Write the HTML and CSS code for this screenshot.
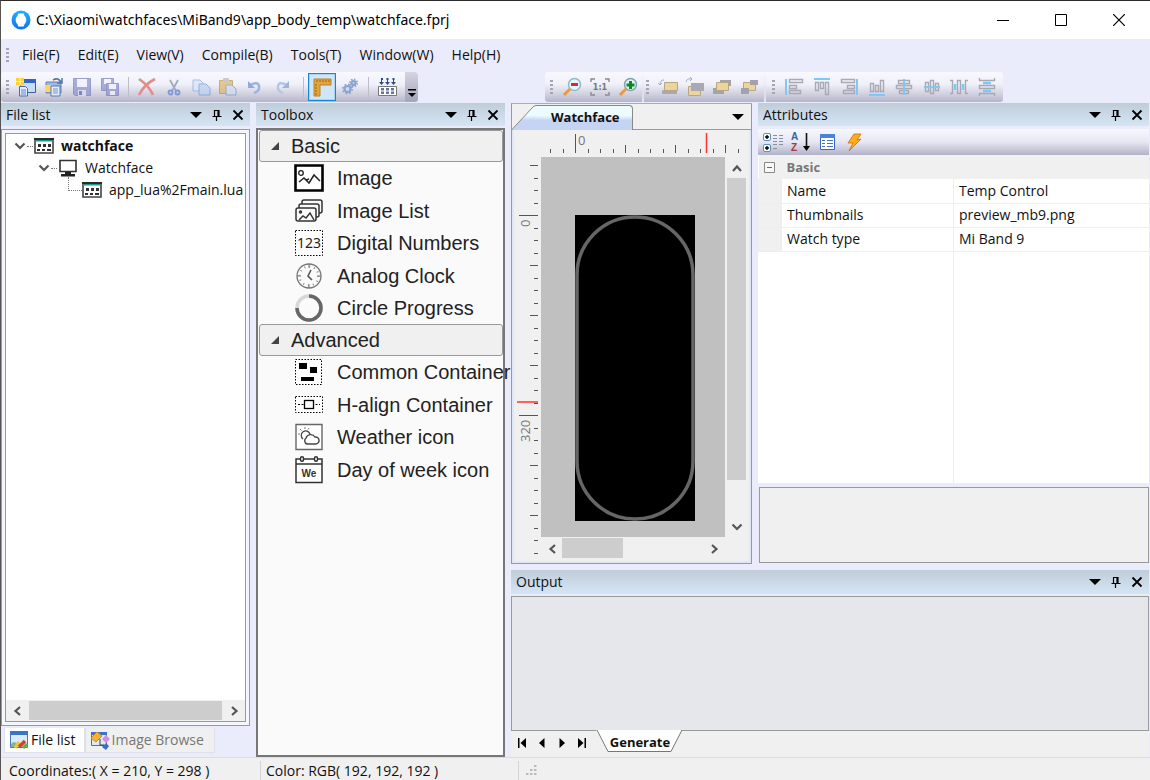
FILE: index.html
```html
<!DOCTYPE html>
<html lang="en">
<head>
<meta charset="utf-8">
<title>C:\Xiaomi\watchfaces\MiBand9\app_body_temp\watchface.fprj</title>
<link rel="stylesheet" href="styles.css">
</head>
<body>
<svg class="defs" aria-hidden="true">
  <defs>
    <linearGradient id="blue" x1="0" y1="0" x2="0" y2="1"><stop offset="0" stop-color="#19b4ff"/><stop offset="1" stop-color="#176ff0"/></linearGradient>
    <linearGradient id="tab" x1="0" y1="0" x2="0" y2="1"><stop offset=".4" stop-color="#edfbff"/><stop offset=".6" stop-color="#c6d4f3"/></linearGradient>
    <symbol id="i-down" viewBox="0 0 12 12"><path d="M0 3h12L6 9z"/></symbol>
    <symbol id="i-pin" viewBox="0 0 12 12"><path d="M3.500 1v6M3 1.500h5M7 1v6M8 1v6M1.500 7.500h9M5.500 8v4" fill="none" stroke="#000" stroke-width="1.200"/></symbol>
    <symbol id="i-close" viewBox="0 0 12 12"><path d="M1.500 1.500l9 9m0-9l-9 9" fill="none" stroke="#000" stroke-width="1.800"/></symbol>
    <symbol id="i-left" viewBox="0 0 12 12"><path d="M9 2L4.500 6L9 10" fill="none" stroke="#555" stroke-width="2.200"/></symbol>
    <symbol id="i-right" viewBox="0 0 12 12"><path d="M3 2l4.500 4L3 10" fill="none" stroke="#555" stroke-width="2.200"/></symbol>
    <symbol id="i-up" viewBox="0 0 12 12"><path d="M2 9l4-4.500L10 9" fill="none" stroke="#555" stroke-width="2.200"/></symbol>
    <symbol id="i-dn" viewBox="0 0 12 12"><path d="M1.500 3.500L6 8l4.500-4.500" fill="none" stroke="#555" stroke-width="2.200"/></symbol>
    <symbol id="i-script" viewBox="0 0 20 16"><path d="M1 1h18v14H1z" fill="#fff" stroke="#444" stroke-width="1.600"/><path d="M0 0h20v2H0z" fill="#2b2b2b"/><path d="M2 2h16v1.500H2z" fill="#149c94"/><path d="M4 6h3v3H4zM9 6h3v3H9zM14 6h3v3h-3zM3 11h3v2H3zM8 11h3v2H8zM13 11h4v2h-4z" fill="#333"/></symbol>
  </defs>
</svg>
<div class="app">
  <header class="titlebar">
    <svg width="20" height="20" viewBox="0 0 20 20"><circle cx="10" cy="10" r="9.500" fill="url(#blue)"/><path d="M7.200 3.500h5.600l.7 2.200c1.300 1.300 1.800 2.500 1.800 4.300s-.5 3-1.800 4.300l-.7 2.200H7.200l-.7-2.200C5.200 13 4.700 11.800 4.700 10s.5-3 1.800-4.300z" fill="#fff"/></svg>
    <h1>C:\Xiaomi\watchfaces\MiBand9\app_body_temp\watchface.fprj</h1>
    <div class="win-buttons">
      <button aria-label="Minimize"><svg width="12" height="12"><path d="M0 6.500h12" stroke="#000"/></svg></button>
      <button aria-label="Maximize"><svg width="12" height="12"><path d="M.5.500h11v11H.500z" fill="none" stroke="#000"/></svg></button>
      <button aria-label="Close"><svg width="12" height="12"><path d="M0 0l12 12M12 0L0 12" stroke="#000" stroke-width="1.200"/></svg></button>
    </div>
  </header>

  <nav class="menubar">
    <i class="grip"></i>
    <button>File(F)</button><button>Edit(E)</button><button>View(V)</button><button>Compile(B)</button><button>Tools(T)</button><button>Window(W)</button><button>Help(H)</button>
  </nav>

  <div class="toolbars">
    <div class="toolbar toolbar-main">
      <i class="grip"></i>
      <button class="tool wide" aria-label="New project"><svg width="20" height="20"><path d="M4.500 2.500h15v13h-15z" fill="#c9dcf6" stroke="#3f6092"/><path d="M4 2h16v4H4z" fill="#3166c4"/><path d="M3.500 9.500h6l2 2V19h-8z" fill="#dfeafb" stroke="#4a6fa8"/><path d="M5 13h5M5 15h5M5 17h5" stroke="#5f8ad0"/><path d="M0 1h8v7H0z" fill="#ffd033"/><path d="M4 0v9M0 4.500h8" stroke="#fff3b0"/></svg></button>
      <button class="tool wide" aria-label="Open project"><svg width="20" height="20"><path d="M2 5h15v11H2z" fill="#9fb9df" stroke="#6480aa"/><path d="M1 8h8v7H1z" fill="#ffd45c"/><path d="M9 3q5-3 8 2M18 1v5h-5" fill="none" stroke="#56749d" stroke-width="1.500"/><path d="M7 9h9v10H7z" fill="#e4edfc" stroke="#5579b5"/><path d="M9 12h5M9 14h5M9 16h5" stroke="#6e93d4"/></svg></button>
      <button class="tool wide faded" aria-label="Save"><svg width="20" height="20"><path d="M1.500 1.500h17v17H3l-1.500-1.500z" fill="#8b90cf" stroke="#747ab9"/><path d="M5 2h10v8H5z" fill="#f2f3ff"/><path d="M6 13h8v6H6z" fill="#dadcf0"/><path d="M7 14h3v4H7z" fill="#5e64a4"/></svg></button>
      <button class="tool wide faded" aria-label="Save all"><svg width="20" height="20"><path d="M1.500 1.500h12v12h-12z" fill="#8b90cf" stroke="#747ab9"/><path d="M4 2h7v5H4z" fill="#f2f3ff"/><path d="M6.500 6.500h12v12h-12z" fill="#8b90cf" stroke="#747ab9"/><path d="M9 7h7v5H9zM10 14h5v4h-5z" fill="#f2f3ff"/></svg></button>
      <i class="sep"></i>
      <div class="run">
        <button class="tool" aria-label="Delete"><svg width="20" height="20"><path d="M2 2c6 4 11 9 14 16M18 2C10 6 5 12 2 18" fill="none" stroke="#e08d8b" stroke-width="2.600"/></svg></button>
        <button class="tool" aria-label="Cut"><svg width="20" height="20"><path d="M6 3l6 11M14 3L8 14" stroke="#9dabc5" stroke-width="1.800"/><circle cx="6.500" cy="15.500" r="2" fill="none" stroke="#7d97da" stroke-width="1.800"/><circle cx="13.500" cy="15.500" r="2" fill="none" stroke="#7d97da" stroke-width="1.800"/></svg></button>
        <button class="tool faded" aria-label="Copy"><svg width="20" height="20"><path d="M2 3h7l3 3v8H2z" fill="#d9e5f8" stroke="#8aa9d6"/><path d="M8 7h7l4 4v7H8z" fill="#b9d0f4" stroke="#7598ce"/></svg></button>
        <button class="tool faded" aria-label="Paste"><svg width="20" height="20"><path d="M1.500 3.500h13v13h-13z" fill="#e0b763" stroke="#b5904c"/><path d="M5 1h6v4H5z" fill="#b9bac0"/><path d="M8 8h6l4 4v6H8z" fill="#cfdcf2" stroke="#8195b5"/></svg></button>
        <button class="tool" aria-label="Undo"><svg width="20" height="20"><path d="M5 8q8-4 9 1t-5 7" fill="none" stroke="#9db4e2" stroke-width="2.400"/><path d="M3 4v7h7z" fill="#8faadf"/></svg></button>
        <button class="tool" aria-label="Redo"><svg width="20" height="20"><path d="M15 8Q7 4 6 9t5 7" fill="none" stroke="#b3c6e8" stroke-width="2.400"/><path d="M17 4v7h-7z" fill="#9db4dc"/></svg></button>
      </div>
      <i class="sep"></i>
      <button class="tool wide selected" aria-label="Show ruler" aria-pressed="true"><svg width="20" height="20"><path d="M2 2h17v6H8v11H2z" fill="#e5a33b" stroke="#bc8127"/><path d="M5 3v2M8 3v2M11 3v2M14 3v2M17 3v2M3 8h2M3 11h2M3 14h2M3 17h2" stroke="#9a6315"/></svg></button>
      <button class="tool wide" aria-label="Settings"><svg width="20" height="20"><g fill="#c8dbf8" stroke="#8aa3cf" stroke-width="2.200"><circle cx="7.500" cy="12" r="3"/><circle cx="13.500" cy="6" r="2"/></g><g fill="none" stroke="#8aa3cf" stroke-width="1.600"><circle cx="7.500" cy="12" r="4.700" stroke-dasharray="1.800 1.900"/><circle cx="13.500" cy="6" r="3.700" stroke-dasharray="1.500 1.400"/></g></svg></button>
      <i class="sep"></i>
      <button class="tool wide" aria-label="Build"><svg width="20" height="20"><path d="M4.500 1v6M10.500 1v6M16.500 1v6" stroke="#2b4c87"/><path d="M2 5h5L4.500 8zM8 5h5l-2.500 3zM14 5h5l-2.500 3zM4 1h2v2H4zM9.500 1h2v2h-2zM15.500 1h2v2h-2z" fill="#2b4c87"/><path d="M1.500 9.500h18v9h-18z" fill="#fff" stroke="#777"/><path d="M4 11h3v6H4zM9 11h3v6H9zM14 11h3v6h-3z" fill="#6273a4"/><path d="M2 14h17" stroke="#fff"/></svg></button>
      <button class="overflow" aria-label="Toolbar options"><svg width="8" height="10"><path d="M0 1h8v1.500H0zM0 5h8L4 9z"/></svg></button>
    </div>

    <div class="toolbar">
      <i class="grip"></i>
      <button class="tool wide" aria-label="Zoom out"><svg width="20" height="20"><path d="M8 12l-6 6" stroke="#f0983b" stroke-width="3"/><circle cx="12.500" cy="7.500" r="6" fill="#e7f7fb" stroke="#8fb9c9" stroke-width="1.500"/><path d="M9 6h7v3H9z" fill="#d8263a"/></svg></button>
      <button class="tool wide" aria-label="Actual size"><svg width="20" height="20"><path d="M1 5V2h4M15 2h4v3M1 15v3h4M15 18h4v-3" fill="none" stroke="#8a8a90" stroke-width="1.400"/><text x="10" y="13" text-anchor="middle" class="icon-text">1:1</text></svg></button>
      <button class="tool wide" aria-label="Zoom in"><svg width="20" height="20"><path d="M8 12l-6 6" stroke="#f0983b" stroke-width="3"/><circle cx="12.500" cy="7.500" r="6" fill="#dff5ee" stroke="#7fa3b0" stroke-width="1.500"/><path d="M11 4h3v2.500h2.500v3H14V12h-3V9.500H8.500v-3H11z" fill="#0a8a20"/></svg></button>
      <i class="joint"></i>
      <i class="grip"></i>
      <button class="tool" aria-label="Bring forward"><svg width="20" height="20"><path d="M7 12h12v5H4v-3z" fill="#a9a9b3"/><path d="M6.500 5.500h13v8h-13z" fill="#ecd49a" stroke="#b5a785"/><path d="M6 3Q2 3 2 8M0 6l2 2 2-2" fill="none" stroke="#9db0cc"/></svg></button>
      <button class="tool" aria-label="Send backward"><svg width="20" height="20"><path d="M3.500 9.500h12v9h-12z" fill="#ecd49a" stroke="#b5a785"/><path d="M6 6h13v8H6z" fill="#a9a9b3"/><path d="M1 5Q2 1 6 2M5 0l2 2-2 2" fill="none" stroke="#9db0cc"/></svg></button>
      <button class="tool" aria-label="Bring to front"><svg width="20" height="20"><path d="M8 3h11v6H8zM1 11h11v6H1z" fill="#a3a3ad"/><path d="M4.500 5.500h12v8h-12z" fill="#ecd49a" stroke="#b5a785"/></svg></button>
      <button class="tool" aria-label="Send to back"><svg width="20" height="20"><path d="M4.500 5.500h12v8h-12z" fill="#ecd49a" stroke="#b5a785"/><path d="M11 3h8v5h-8zM2 11h8v6H2z" fill="#a3a3ad"/></svg></button>
      <i class="joint last"></i>
      <i class="grip"></i>
      <button class="tool wide" aria-label="Align left"><svg width="20" height="20"><path d="M2 2v16" stroke="#7cc8f6" stroke-width="2"/><path d="M5.500 2.500h13v3h-13zM5.500 8.500h7v3h-7zM5.500 13.500h11v3h-11z" class="shape"/></svg></button>
      <button class="tool" aria-label="Align top"><svg width="20" height="20"><path d="M2 2h16" stroke="#7cc8f6" stroke-width="2"/><path d="M3.500 5.500h3v8h-3zM8.500 5.500h3v6h-3zM13.500 5.500h3v12h-3z" class="shape"/></svg></button>
      <button class="tool wide" aria-label="Align right"><svg width="20" height="20"><path d="M18 2v16" stroke="#7cc8f6" stroke-width="2"/><path d="M2.500 2.500h13v3h-13zM8.500 8.500h7v3h-7zM4.500 13.500h11v3h-11z" class="shape"/></svg></button>
      <button class="tool" aria-label="Align bottom"><svg width="20" height="20"><path d="M2 18h16" stroke="#7cc8f6" stroke-width="2"/><path d="M3.500 6.500h3v8h-3zM8.500 8.500h3v6h-3zM13.500 3.500h3v11h-3z" class="shape"/></svg></button>
      <button class="tool wide" aria-label="Align centre vertically"><svg width="20" height="20"><path d="M4.500 3.500h11v3h-11zM2.500 8.500h15v3h-15zM5.500 13.500h9v3h-9z" class="shape"/><path d="M10 2v16" stroke="#7cc8f6" stroke-width="2"/></svg></button>
      <button class="tool" aria-label="Align centre horizontally"><svg width="20" height="20"><path d="M3.500 5.500h3v9h-3zM8.500 3.500h3v13h-3zM13.500 6.500h3v7h-3z" class="shape"/><path d="M2 10h16" stroke="#7cc8f6" stroke-width="2"/></svg></button>
      <button class="tool wide" aria-label="Distribute horizontally"><svg width="20" height="20"><path d="M1 3.500h2.500v13H1M19 3.500h-2.500v13H19M8.500 3.500h3v13h-3z" class="shape"/><path d="M6 7v6M14 7v6" stroke="#7cc8f6" stroke-width="2.500"/></svg></button>
      <button class="tool" aria-label="Distribute vertically"><svg width="20" height="20"><path d="M2.500 1v2.500h15V1M2.500 19v-2.500h15V19M2.500 8.500h15v3h-15z" class="shape"/><path d="M6 6h8M6 14h8" stroke="#7cc8f6" stroke-width="2.500"/></svg></button>
    </div>
  </div>

  <main class="workspace">
    <section class="panel files">
      <header class="panel-head"><h2>File list</h2><button aria-label="Menu"><svg><use href="#i-down"/></svg></button><button aria-label="Pin"><svg><use href="#i-pin"/></svg></button><button aria-label="Close"><svg><use href="#i-close"/></svg></button></header>
      <div class="frame">
        <div class="tree-box">
          <ul class="tree">
            <li class="lv1"><svg class="chev"><use href="#i-dn"/></svg><i class="dots"></i><svg width="20" height="16"><use href="#i-script"/></svg><b>watchface</b></li>
            <li class="lv2"><svg class="chev"><use href="#i-dn"/></svg><i class="dots"></i><svg width="20" height="18"><path d="M2 1.500h16v11H2z" fill="#fff" stroke="#333" stroke-width="1.600"/><path d="M7 13h6v2H7zM3 15h14v2.500H3z" fill="#222"/></svg><span>Watchface</span></li>
            <li class="lv3"><i class="elbow"></i><svg width="20" height="16"><use href="#i-script"/></svg><span>app_lua%2Fmain.lua</span></li>
          </ul>
          <div class="scroll-h"><button aria-label="Scroll left"><svg><use href="#i-left"/></svg></button><i class="thumb"></i><button aria-label="Scroll right"><svg><use href="#i-right"/></svg></button></div>
        </div>
      </div>
      <div class="dock-tabs">
        <button class="on"><svg width="20" height="20"><path d="M1.500 1.500h17v16h-17z" fill="#dceaf8" stroke="#4b79c0"/><path d="M1 1h18v4H1z" fill="#3973cb"/><path d="M2 14q3-4 6 0v3H2z" fill="#7fb7a0"/><path d="M6 18l3-5 3 2" stroke="#f0c52e" stroke-width="3" fill="none"/><path d="M10 17l6-6" stroke="#e33b2b" stroke-width="3.500"/><path d="M14 18l4-4" stroke="#58b53a" stroke-width="3"/></svg>File list</button>
        <button><svg width="20" height="20"><path d="M1.500 2.500h15v13h-15z" fill="#dceaf8" stroke="#4b6fa8"/><path d="M1 2h16v3H1z" fill="#3973cb"/><path d="M7 2l5 4-6 6-5-4z" fill="#f4b332" stroke="#d08a1c"/><path d="M16 5l4 4-4 4-4-4z" fill="#d78ce4"/><path d="M16 13l3 3-3 4-4-3z" fill="#3970cc"/><path d="M10 9v6h4" fill="none" stroke="#444"/></svg>Image Browse</button>
      </div>
    </section>

    <section class="panel toolbox">
      <header class="panel-head"><h2>Toolbox</h2><button aria-label="Menu"><svg><use href="#i-down"/></svg></button><button aria-label="Pin"><svg><use href="#i-pin"/></svg></button><button aria-label="Close"><svg><use href="#i-close"/></svg></button></header>
      <div class="tool-list">
        <button class="cat"><svg width="8" height="8"><path d="M8 0v8H0z" fill="#444"/></svg>Basic</button>
        <ul>
          <li><svg width="30" height="28"><path d="M1.500 1.500h27v25h-27z" fill="#fff" stroke="#000" stroke-width="2.600"/><circle cx="7" cy="9" r="2.300" fill="none" stroke="#222" stroke-width="1.300"/><path d="M5 18l5-4 5 5 5-8 6 6M12 16l3-1" fill="none" stroke="#222" stroke-width="1.500"/></svg>Image</li>
          <li><svg width="30" height="28"><g fill="#fafafa" stroke="#333" stroke-width="1.500"><rect x="8" y="3" width="20" height="13" rx="2"/><rect x="5" y="7" width="20" height="13" rx="2"/><rect x="2" y="11" width="20" height="13" rx="2"/><circle cx="6.500" cy="15" r="1"/><path d="M5 23l4-4 3 2 4-5 4 7" fill="none"/></g></svg>Image List</li>
          <li><svg width="30" height="28"><rect x="1.500" y="1.500" width="27" height="25" fill="#fff" stroke="#000" stroke-dasharray="1.500 1.500"/><text x="15" y="19" text-anchor="middle" class="digits">123</text></svg>Digital Numbers</li>
          <li><svg width="30" height="28"><circle cx="15" cy="14" r="12" fill="none" stroke="#777" stroke-width="1.300"/><circle cx="15" cy="14" r="9.500" fill="none" stroke="#888" stroke-width="2" stroke-dasharray="1 3.970"/><path d="M15 2v4M15 22v4M3 14h4M23 14h4" stroke="#777"/><path d="M17 8l-3 6 4 4" fill="none" stroke="#555" stroke-width="1.600"/></svg>Analog Clock</li>
          <li><svg width="30" height="28"><circle cx="15" cy="14" r="12" fill="none" stroke="#d8d8d8" stroke-width="3.500"/><path d="M15 2a12 12 0 1 1-12 12" fill="none" stroke="#666" stroke-width="3.500"/></svg>Circle Progress</li>
        </ul>
        <button class="cat"><svg width="8" height="8"><path d="M8 0v8H0z" fill="#444"/></svg>Advanced</button>
        <ul>
          <li><svg width="30" height="28"><rect x="1.500" y="1.500" width="26" height="25" fill="#fff" stroke="#000" stroke-dasharray="1.500 1.500"/><path d="M5 5h8v6H5zM16 9h7v6h-7zM7 19h13v4H7z"/></svg>Common Container</li>
          <li><svg width="30" height="28"><rect x="1.500" y="5.500" width="27" height="16" fill="#fff" stroke="#000" stroke-dasharray="1.500 1.500"/><path d="M4 13.500h22" stroke="#000" stroke-dasharray="2 1.500"/><rect x="10.500" y="9.500" width="9" height="8" fill="#fff" stroke="#000" stroke-width="1.300"/></svg>H-align Container</li>
          <li><svg width="30" height="28"><path d="M2 1.500h26v25H2z" fill="#fff" stroke="#666" stroke-width="1.400"/><path d="M13 21a3.500 3.500 0 0 1-1-6 5 5 0 0 1 9-1 3.500 3.500 0 1 1 1 7z" fill="none" stroke="#444" stroke-width="1.400"/><path d="M9 16a4.500 4.500 0 1 1 7-5" fill="none" stroke="#444" stroke-width="1.300"/><path d="M11 4v2M6 6l1.500 1.500M4 11h2M15 5l-1 1.500" stroke="#777"/></svg>Weather icon</li>
          <li><svg width="30" height="28"><path d="M2 3h26v23.500H2zM2 8h26" fill="#fff" stroke="#333" stroke-width="1.500"/><g fill="#fff" stroke="#333" stroke-width="1.500"><rect x="6.500" y=".8" width="3" height="4.500" rx="1.500"/><rect x="20.500" y=".8" width="3" height="4.500" rx="1.500"/></g><text x="15" y="21" text-anchor="middle" class="we">We</text></svg>Day of week icon</li>
        </ul>
      </div>
    </section>

    <div class="right">
      <div class="upper">
        <section class="document">
          <div class="doc-tabs">
            <button class="doc-tab"><svg width="24" height="26"><path d="M0 26L20 4Q22 1.500 24 1.500V26z" fill="url(#tab)"/><path d="M0 25.500L20 4Q22 1.500 24 1.500" fill="none" stroke="#888"/></svg><span>Watchface</span></button>
            <button class="doc-menu" aria-label="Documents"><svg width="12" height="12"><use href="#i-down"/></svg></button>
          </div>
          <div class="doc-body">
            <div class="ruler-top">
              <svg width="210" height="28"><path d="M9.500 19v4M22.500 19v4M47.500 19v4M59.500 19v4M72.500 19v4M97.500 19v4M109.500 19v4M122.500 19v4M147.500 19v4M159.500 19v4M172.500 19v4M197.500 19v4M84.500 15v8M134.500 15v8M184.500 15v8M34.500 4v19" stroke="#555"/><path d="M165.500 3v20" stroke="#f33" stroke-width="1.500"/><text x="37" y="15">0</text></svg>
            </div>
            <div class="ruler-left">
              <svg width="27" height="400"><path d="M20 21.500h4M20 33.500h4M20 46.500h4M20 71.500h4M20 83.500h4M20 96.500h4M20 121.500h4M20 133.500h4M20 146.500h4M20 171.500h4M20 183.500h4M20 196.500h4M20 221.500h4M20 233.500h4M20 246.500h4M20 271.500h4M20 283.500h4M20 296.500h4M20 321.500h4M20 333.500h4M20 346.500h4M20 371.500h4M20 383.500h4M20 396.500h4M16 8.500h8M16 108.500h8M16 158.500h8M16 208.500h8M16 358.500h8M16 308.500h8M5 58.500h19M5 258.500h19" stroke="#555"/><path d="M3 245h21" stroke="#f33" stroke-width="1.500"/><text transform="translate(16 70) rotate(-90)">0</text><text transform="translate(16 285) rotate(-90)">320</text></svg>
            </div>
            <div class="canvas"><svg width="120" height="306"><path d="M0 0h120v306H0z"/><rect x="2" y="2" width="116" height="302" rx="58" fill="none" stroke="#666" stroke-width="3.500"/></svg></div>
            <div class="scroll-v"><button aria-label="Scroll up"><svg><use href="#i-up"/></svg></button><i class="thumb"></i><button aria-label="Scroll down"><svg><use href="#i-dn"/></svg></button></div>
            <div class="scroll-h"><button aria-label="Scroll left"><svg><use href="#i-left"/></svg></button><i class="thumb"></i><button aria-label="Scroll right"><svg><use href="#i-right"/></svg></button></div>
          </div>
        </section>

        <section class="panel attributes">
          <header class="panel-head"><h2>Attributes</h2><button aria-label="Menu"><svg><use href="#i-down"/></svg></button><button aria-label="Pin"><svg><use href="#i-pin"/></svg></button><button aria-label="Close"><svg><use href="#i-close"/></svg></button></header>
          <div class="attr-tools">
            <button aria-label="Categorized"><svg width="20" height="20"><g fill="#fff" stroke="#5d8fbd"><rect x=".5" y="1.500" width="7" height="7" rx="1.500"/><rect x=".5" y="12.500" width="7" height="7" rx="1.500"/></g><path d="M2 5h4M4 3v4M2 16h4M4 14v4" stroke="#000" stroke-width="1.400"/><path d="M10 3.500h4M16 3.500h4M10 6.500h4M16 6.500h4M10 9.500h4M16 9.500h4M10 12.500h4M16 12.500h4M10 16.500h4" stroke="#8294a4"/></svg></button>
            <button aria-label="Sort A to Z"><svg class="az" width="20" height="20"><text x="1" y="8" fill="#3b62a8">A</text><text x="1" y="19" fill="#a43b3b">Z</text><path d="M16.500 1v15" stroke="#111" stroke-width="1.600"/><path d="M13 14h7l-3.500 5z"/></svg></button>
            <button aria-label="Properties"><svg width="20" height="20"><path d="M3.500 2.500h14v15h-14z" fill="#fff" stroke="#3566c0"/><path d="M3 2h15v4H3z" fill="#4a83dd"/><path d="M5 8.500h3M5 11.500h3M5 14.500h3M10 8.500h6M10 11.500h6M10 14.500h6" stroke="#4572be"/></svg></button>
            <button aria-label="Events"><svg width="20" height="20"><path d="M10 2h7l-4 6 4-1L5 19l4-8H4z" fill="#ffae18" stroke="#cc6a12" stroke-width=".8"/></svg></button>
          </div>
          <div class="attr-grid">
            <table>
              <colgroup><col class="col-gut"><col class="col-name"><col></colgroup>
              <thead><tr><th class="gut"><button aria-label="Collapse Basic"><svg width="11" height="11"><path d="M.5.500h10v10H.500z" fill="#f8f8f8" stroke="#888"/><path d="M3 5.500h5" stroke="#4b6ea8"/></svg></button></th><th colspan="2">Basic</th></tr></thead>
              <tbody>
                <tr><td class="gut"></td><td>Name</td><td>Temp Control</td></tr>
                <tr><td class="gut"></td><td>Thumbnails</td><td>preview_mb9.png</td></tr>
                <tr><td class="gut"></td><td>Watch type</td><td>Mi Band 9</td></tr>
              </tbody>
            </table>
            <div class="attr-rest"></div>
          </div>
          <div class="attr-help"></div>
        </section>
      </div>

      <section class="panel output">
        <header class="panel-head"><h2>Output</h2><button aria-label="Menu"><svg><use href="#i-down"/></svg></button><button aria-label="Pin"><svg><use href="#i-pin"/></svg></button><button aria-label="Close"><svg><use href="#i-close"/></svg></button></header>
        <div class="out-box"></div>
        <div class="out-tabs">
          <button aria-label="First"><svg width="10" height="10"><path d="M1 0h1.500v10H1zM9 0v10L3.500 5z"/></svg></button>
          <button aria-label="Previous"><svg width="10" height="10"><path d="M7.500 0v10L2 5z"/></svg></button>
          <button aria-label="Next"><svg width="10" height="10"><path d="M2.500 0v10L8 5z"/></svg></button>
          <button aria-label="Last"><svg width="10" height="10"><path d="M1 0v10l5.500-5zM7.500 0H9v10H7.500z"/></svg></button>
          <button class="sheet"><svg width="88" height="23"><path d="M0 0h86L75 21.500H12z" fill="#fff"/><path d="M1 0l11 21.500h63L86 0" fill="none" stroke="#777"/></svg><span>Generate</span></button>
        </div>
      </section>
    </div>
  </main>

  <footer class="status">
    <span class="coords">Coordinates:( X = 210, Y = 298 )</span>
    <span class="color">Color: RGB( 192, 192, 192 )</span>
    <svg width="12" height="12"><path d="M8 0h2.500v2H8zM4 4h2.500v2H4zM8 4h2.500v2H8zM0 8h2.500v2H0zM4 8h2.500v2H4zM8 8h2.500v2H8z" fill="#bbb"/></svg>
  </footer>
</div>
</body>
</html>
```
FILE: styles.css
```css
* { box-sizing: border-box; }
body { margin: 0; font: 14px/20px "Open Sans", "Noto Sans", sans-serif; color: #111; }
button { margin: 0; padding: 0; border: 0; background: none; font: inherit; color: inherit; display: flex; align-items: center; justify-content: center; }
h1, h2, ul { margin: 0; padding: 0; font-weight: 400; list-style: none; }
i { font-style: normal; flex: none; }
svg { flex: none; display: block; }
.defs { position: absolute; width: 0; height: 0; }

.app { height: 100vh; display: flex; flex-direction: column; background: #ebecfb; border-top: 1px solid #2c2c2c; border-left: 1px solid #555; }

.titlebar { height: 38px; flex: none; display: flex; align-items: center; gap: 5px; padding: 0 2px 0 10px; background: #fff; }
.titlebar h1 { flex: 1; font: 14px/20px "Noto Sans", sans-serif; color: #000; }
.win-buttons { display: flex; }
.win-buttons button { width: 58px; height: 38px; }

.menubar { height: 32px; flex: none; display: flex; align-items: center; padding-left: 5px; }
.menubar button { padding: 0 9px; }
.grip { width: 3px; height: 15px; background: repeating-linear-gradient(#a4a4b2 0 2px, transparent 2px 4px); }
.menubar .grip { margin-right: 4px; }

.toolbars { height: 32px; flex: none; display: flex; align-items: center; }
.toolbar { height: 30px; display: flex; align-items: center; padding: 0 3px 0 4px; border-radius: 3px; background: linear-gradient(#f8f8fe, #f0f1f9 40%, #cfcfde 75%, #b5b5cb); }
.toolbar-main { margin-right: 127px; padding-right: 0; }
.toolbar .grip { margin-right: 5px; margin-left: 1px; }
.toolbar-main .grip { margin-right: 3px; }
.tool { width: 27px; height: 28px; }
.tool.wide { width: 28px; }
.faded svg { opacity: .7; }
.run { display: flex; margin-right: 4px; }
.sep { width: 1px; height: 20px; margin: 0 4px; background: #bdbdc8; }
.tool.selected { border: 1px solid #1883d7; background: #cfe6f8; box-shadow: inset 0 0 0 1px #a8d4f5; }
.overflow { width: 13px; height: 30px; margin-left: 4px; padding-top: 12px; border-radius: 0 4px 4px 0; background: linear-gradient(#d4d4e2, #a4a4bc); }
.joint { width: 2px; height: 30px; margin: 0 1px 0 0; background: linear-gradient(transparent, #e4e4f2); }
.joint.last { margin: 0 5px 0 2px; }
.shape { fill: none; stroke: #a9a9b4; stroke-width: 1.400; }
.icon-text { font: bold 8px "DejaVu Sans", sans-serif; fill: #777; }

.workspace { flex: 1; display: flex; gap: 6px; min-height: 0; padding-right: 1px; }
.panel { display: flex; flex-direction: column; min-width: 0; }
.panel-head { height: 23px; flex: none; display: flex; align-items: center; gap: 9px; padding: 0 6px 0 5px; background: linear-gradient(#bfcddb, #d6e5f3); }
.panel-head h2 { flex: 1; font-size: 14px; }
.panel-head svg { width: 12px; height: 12px; }

.files { width: 249px; }
.toolbox { width: 249px; }
.frame { flex: 1; min-height: 0; margin: 3px 0 0; padding: 3px; border: 1px solid #999; background: #f5f6fd; display: flex; }
.tree-box { flex: 1; min-width: 0; border: 1px solid #999; background: #fff; display: flex; flex-direction: column; }
.tree { flex: 1; overflow: hidden; padding-top: 1px; }
.tree li { height: 22px; display: flex; align-items: center; white-space: nowrap; }
.tree .chev { width: 12px; height: 12px; }
.lv1 { padding-left: 8px; }
.lv2 { padding-left: 32px; }
.lv3 { padding-left: 62px; }
.tree b, .tree span { margin-left: 7px; }
.dots { width: 6px; margin: 0 1px; border-top: 1px dotted #777; }
.elbow { width: 14px; height: 14px; margin-top: -12px; border: dotted #777; border-width: 0 0 1px 1px; }
.scroll-h { height: 21px; display: flex; background: #f0f0f0; }
.scroll-h button, .scroll-v button { width: 21px; height: 21px; flex: none; }
.scroll-h svg, .scroll-v svg { width: 12px; height: 12px; }
.thumb { background: #cdcdcd; }
.tree-box .scroll-h { justify-content: space-between; }
.tree-box .thumb { flex: 1; margin: 1px 2px; }
.dock-tabs { height: 31px; flex: none; display: flex; align-items: flex-start; padding: 2px 0 0 3px; }
.dock-tabs button { height: 25px; gap: 2px; padding: 0 10px 0 4px; background: #f0f0f0; border: 1px solid #e0e0e8; border-top: 0; color: #777; }
.dock-tabs .on { background: #fff; color: #111; padding-right: 8px; }

.tool-list { flex: 1; min-height: 0; margin-top: 2px; padding: 0 0 0 1px; border: 2px solid #777; background: #fafafa; font: 20px/32px "Liberation Sans", Arial, sans-serif; color: #222; white-space: nowrap; }
.tool-list .cat { width: 100%; height: 32px; justify-content: flex-start; gap: 12px; padding-left: 11px; border: 1px solid #999; border-radius: 3px; background: #f0f0f0; }
.tool-list ul { padding: 0 0 0 35px; }
.tool-list li { height: 32px; display: flex; align-items: center; gap: 13px; }
.tool-list li:nth-child(even) { height: 33px; }
.digits { font: 14px "Noto Sans", sans-serif; fill: #222; }
.we { font: bold 10px "Liberation Sans", sans-serif; fill: #333; }

.right { flex: 1; min-width: 0; display: flex; flex-direction: column; gap: 6px; }
.upper { flex: 1; display: flex; gap: 6px; min-height: 0; }
.document { width: 241px; flex: none; display: flex; flex-direction: column; border: 1px solid #999; border-top-color: #aab; background: #f0f0f0; }
.doc-tabs { height: 26px; flex: none; display: flex; justify-content: space-between; border-bottom: 1px solid #999; }
.doc-tab { height: 26px; align-items: stretch; font-weight: 700; font-size: 13px; }
.doc-tab span { padding: 1px 12px 0 15px; border: 1px solid #888; border-width: 1px 1px 0 0; margin-top: 1px; border-radius: 0 4px 0 0; background: linear-gradient(#edfbff 40%, #c6d4f3 60%); }
.doc-menu { padding-right: 7px; }
.doc-body { flex: 1; display: grid; grid-template: 27px minmax(0, 1fr) 24px / 27px 1fr 24px; border: 2px solid #dfe7f8; border-top: 0; min-height: 0; }
.ruler-top { grid-column: 1 / 4; padding-left: 27px; }
.ruler-left { grid-row: 2 / 4; overflow: hidden; }
.doc-body text { font: 13px "Open Sans", sans-serif; fill: #777; }
.canvas { background: #c0c0c0; padding: 58px 0 0 34px; }
.scroll-v { display: flex; flex-direction: column; padding: 0 1px; }
.scroll-v .thumb { width: 19px; flex: 1; margin: 0 0 36px 1px; }
.doc-body .scroll-h { grid-column: 2; padding-top: 1px; height: 22px; }
.doc-body .scroll-h .thumb { width: 61px; margin: 0 auto 1px 0; }

.attributes { flex: 1; }
.attr-tools { height: 26px; flex: none; margin-top: 3px; display: flex; gap: 7px; padding-left: 5px; align-items: center; background: linear-gradient(#f7f8fe, #e6e7f2 50%, #b2b2c8); }
.az { overflow: visible; font: bold 10px/10px "Liberation Sans", sans-serif; }
.attr-grid { flex: 1; display: flex; flex-direction: column; background: #fff; }
table { width: 100%; border-collapse: collapse; table-layout: fixed; }
.col-gut { width: 23px; }
.col-name { width: 172px; }
th, td { height: 24px; padding: 0 5px; text-align: left; }
th { background: #f0f0f0; color: #777; font-weight: 700; font-size: 13px; }
td { border-bottom: 1px solid #eee; border-left: 1px solid #eee; }
.gut { background: #f0f0f0; }
.attr-rest { flex: 1; width: 196px; border-right: 1px solid #eee; }
.attr-help { height: 76px; flex: none; margin: 4px 0 1px 1px; border: 1px solid #999; background: #f0f0f0; }

.output { height: 187px; flex: none; }
.output .panel-head { height: 24px; }
.out-box { flex: 1; margin-top: 2px; border: 1px solid #999; background: #e6e7ea; }
.out-tabs { height: 26px; flex: none; display: flex; padding-left: 1px; background: #f0f0f0; }
.out-tabs button { width: 20px; height: 23px; }
.out-tabs .sheet { display: grid; width: 88px; margin-left: 4px; font-weight: 700; font-size: 13px; place-items: center; margin-top: -1px; }
.sheet > * { grid-area: 1 / 1; }

.status { height: 23px; flex: none; display: flex; align-items: center; background: #f0f0f0; border-top: 1px solid #ddd; padding-top: 3px; }
.status span { border-right: 1px solid #d4d4d4; }
.coords { width: 260px; padding-left: 8px; }
.color { width: 258px; padding-left: 5px; }
.status svg { margin-left: 7px; }
```
